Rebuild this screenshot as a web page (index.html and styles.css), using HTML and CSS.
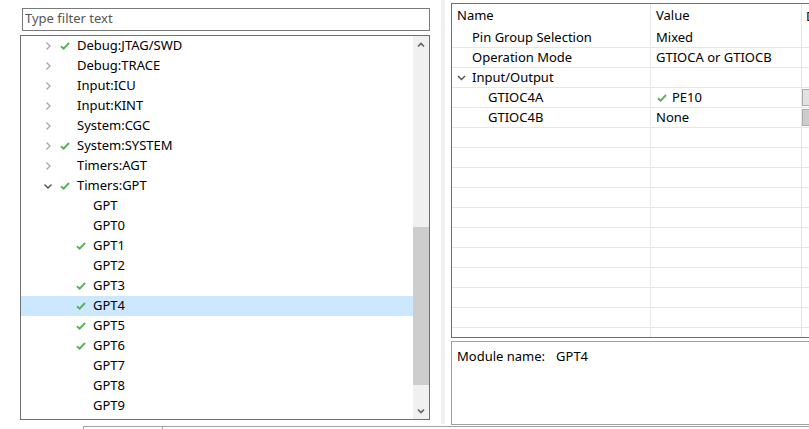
FILE: index.html
```html
<!DOCTYPE html>
<html>
<head>
<meta charset="utf-8">
<link rel="stylesheet" href="styles.css">
</head>
<body>
<div class="app">
  <div class="main">
    <div class="left">
      <div class="filter">Type filter text</div>
      <div class="tree">
        <div class="tree-list">
          <div class="row"><span class="twisty"><svg width="7" height="10" viewBox="0 0 7 10"><path d="M1.5 1.5 L5 5 L1.5 8.5" class="tw-c"/></svg></span><span class="chk"><svg width="10" height="8" viewBox="0 0 10 8"><path d="M1 4.2 L3.6 6.7 L9 1" class="ck"/></svg></span><span class="label">Debug:JTAG/SWD</span></div>
          <div class="row"><span class="twisty"><svg width="7" height="10" viewBox="0 0 7 10"><path d="M1.5 1.5 L5 5 L1.5 8.5" class="tw-c"/></svg></span><span class="chk"></span><span class="label">Debug:TRACE</span></div>
          <div class="row"><span class="twisty"><svg width="7" height="10" viewBox="0 0 7 10"><path d="M1.5 1.5 L5 5 L1.5 8.5" class="tw-c"/></svg></span><span class="chk"></span><span class="label">Input:ICU</span></div>
          <div class="row"><span class="twisty"><svg width="7" height="10" viewBox="0 0 7 10"><path d="M1.5 1.5 L5 5 L1.5 8.5" class="tw-c"/></svg></span><span class="chk"></span><span class="label">Input:KINT</span></div>
          <div class="row"><span class="twisty"><svg width="7" height="10" viewBox="0 0 7 10"><path d="M1.5 1.5 L5 5 L1.5 8.5" class="tw-c"/></svg></span><span class="chk"></span><span class="label">System:CGC</span></div>
          <div class="row"><span class="twisty"><svg width="7" height="10" viewBox="0 0 7 10"><path d="M1.5 1.5 L5 5 L1.5 8.5" class="tw-c"/></svg></span><span class="chk"><svg width="10" height="8" viewBox="0 0 10 8"><path d="M1 4.2 L3.6 6.7 L9 1" class="ck"/></svg></span><span class="label">System:SYSTEM</span></div>
          <div class="row"><span class="twisty"><svg width="7" height="10" viewBox="0 0 7 10"><path d="M1.5 1.5 L5 5 L1.5 8.5" class="tw-c"/></svg></span><span class="chk"></span><span class="label">Timers:AGT</span></div>
          <div class="row"><span class="twisty"><svg width="10" height="7" viewBox="0 0 10 7"><path d="M1.5 1.5 L5 5 L8.5 1.5" class="tw-e"/></svg></span><span class="chk"><svg width="10" height="8" viewBox="0 0 10 8"><path d="M1 4.2 L3.6 6.7 L9 1" class="ck"/></svg></span><span class="label">Timers:GPT</span></div>
          <div class="row child"><span class="twisty"></span><span class="indent"></span><span class="chk"></span><span class="label">GPT</span></div>
          <div class="row child"><span class="twisty"></span><span class="indent"></span><span class="chk"></span><span class="label">GPT0</span></div>
          <div class="row child"><span class="twisty"></span><span class="indent"></span><span class="chk"><svg width="10" height="8" viewBox="0 0 10 8"><path d="M1 4.2 L3.6 6.7 L9 1" class="ck"/></svg></span><span class="label">GPT1</span></div>
          <div class="row child"><span class="twisty"></span><span class="indent"></span><span class="chk"></span><span class="label">GPT2</span></div>
          <div class="row child"><span class="twisty"></span><span class="indent"></span><span class="chk"><svg width="10" height="8" viewBox="0 0 10 8"><path d="M1 4.2 L3.6 6.7 L9 1" class="ck"/></svg></span><span class="label">GPT3</span></div>
          <div class="row child selected"><span class="twisty"></span><span class="indent"></span><span class="chk"><svg width="10" height="8" viewBox="0 0 10 8"><path d="M1 4.2 L3.6 6.7 L9 1" class="ck"/></svg></span><span class="label">GPT4</span></div>
          <div class="row child"><span class="twisty"></span><span class="indent"></span><span class="chk"><svg width="10" height="8" viewBox="0 0 10 8"><path d="M1 4.2 L3.6 6.7 L9 1" class="ck"/></svg></span><span class="label">GPT5</span></div>
          <div class="row child"><span class="twisty"></span><span class="indent"></span><span class="chk"><svg width="10" height="8" viewBox="0 0 10 8"><path d="M1 4.2 L3.6 6.7 L9 1" class="ck"/></svg></span><span class="label">GPT6</span></div>
          <div class="row child"><span class="twisty"></span><span class="indent"></span><span class="chk"></span><span class="label">GPT7</span></div>
          <div class="row child"><span class="twisty"></span><span class="indent"></span><span class="chk"></span><span class="label">GPT8</span></div>
          <div class="row child"><span class="twisty"></span><span class="indent"></span><span class="chk"></span><span class="label">GPT9</span></div>
        </div>
        <div class="vscroll">
          <div class="sb-btn"><svg width="8" height="6" viewBox="0 0 8 6"><path d="M1 4.5 L4 1.5 L7 4.5" class="arrow"/></svg></div>
          <div class="sb-track-top"></div>
          <div class="sb-thumb"></div>
          <div class="sb-fill"></div>
          <div class="sb-btn"><svg width="8" height="6" viewBox="0 0 8 6"><path d="M1 1.5 L4 4.5 L7 1.5" class="arrow"/></svg></div>
        </div>
      </div>
    </div>
    <div class="sash"></div>
    <div class="right">
      <div class="props">
        <div class="prow head"><div class="c1 pad0">Name</div><div class="c2">Value</div><div class="c3">D</div></div>
        <div class="prow"><div class="c1 pad1">Pin Group Selection</div><div class="c2">Mixed</div><div class="c3"></div></div>
        <div class="prow"><div class="c1 pad1">Operation Mode</div><div class="c2">GTIOCA or GTIOCB</div><div class="c3"></div></div>
        <div class="prow"><div class="c1 pad0"><span class="ptwisty"><svg width="9" height="6" viewBox="0 0 9 6"><path d="M1 1 L4.5 4.5 L8 1" class="tw-e"/></svg></span>Input/Output</div><div class="c2"></div><div class="c3"></div></div>
        <div class="prow"><div class="c1 pad2">GTIOC4A</div><div class="c2"><span class="pchk"><svg width="10" height="8" viewBox="0 0 10 8"><path d="M1 4.2 L3.6 6.7 L9 1" class="ck"/></svg></span>PE10</div><div class="c3"><span class="btn light"></span></div></div>
        <div class="prow"><div class="c1 pad2">GTIOC4B</div><div class="c2">None</div><div class="c3"><span class="btn dark"></span></div></div>
        <div class="prow"><div class="c1"></div><div class="c2"></div><div class="c3"></div></div>
        <div class="prow"><div class="c1"></div><div class="c2"></div><div class="c3"></div></div>
        <div class="prow"><div class="c1"></div><div class="c2"></div><div class="c3"></div></div>
        <div class="prow"><div class="c1"></div><div class="c2"></div><div class="c3"></div></div>
        <div class="prow"><div class="c1"></div><div class="c2"></div><div class="c3"></div></div>
        <div class="prow"><div class="c1"></div><div class="c2"></div><div class="c3"></div></div>
        <div class="prow"><div class="c1"></div><div class="c2"></div><div class="c3"></div></div>
        <div class="prow"><div class="c1"></div><div class="c2"></div><div class="c3"></div></div>
        <div class="prow"><div class="c1"></div><div class="c2"></div><div class="c3"></div></div>
        <div class="prow"><div class="c1"></div><div class="c2"></div><div class="c3"></div></div>
        <div class="prow rest"><div class="c1"></div><div class="c2"></div><div class="c3"></div></div>
      </div>
      <div class="module"><span>Module name:</span><span class="modval">GPT4</span></div>
    </div>
  </div>
  <div class="status"><div class="tab"></div></div>
</div>
</body>
</html>
```
FILE: styles.css
```css
* { box-sizing: border-box; }
html, body { margin: 0; padding: 0; background: #fff; }
body {
  width: 809px;
  height: 429px;
  overflow: hidden;
  font-family: "Noto Sans", "Liberation Sans", sans-serif;
  font-size: 13px;
  color: #000;
}
.app { display: flex; flex-direction: column; height: 429px; }
.main { display: flex; height: 426px; }

.left { width: 441px; flex: none; padding-top: 8px; }
.filter {
  margin-left: 22px;
  width: 408px;
  height: 23px;
  border: 1px solid #7a7a7a;
  padding-left: 2px;
  color: #555;
  line-height: 19px;
}
.tree {
  margin-top: 4px;
  margin-left: 20px;
  width: 410px;
  height: 385px;
  border: 1px solid #6f6f6f;
  display: flex;
}
.tree-list { width: 392px; flex: none; }
.row {
  height: 20px;
  display: flex;
  align-items: center;
  padding-left: 19px;
  white-space: nowrap;
}
.label { line-height: 18px; padding-bottom: 2px; }
.row.selected { background: #cce8ff; }
.twisty { width: 16px; height: 20px; flex: none; display: flex; align-items: center; justify-content: center; }
.indent { width: 16px; flex: none; }
.chk { width: 18px; height: 20px; flex: none; display: flex; align-items: center; justify-content: center; margin-right: 3px; }
.tw-c { fill: none; stroke: #a8a8a8; stroke-width: 1.4; }
.tw-e { fill: none; stroke: #505050; stroke-width: 1.4; }
.ck { fill: none; stroke: #5fae5f; stroke-width: 1.9; }

.vscroll { width: 16px; flex: none; background: #f0f0f0; display: flex; flex-direction: column; }
.sb-btn { height: 17px; flex: none; display: flex; align-items: center; justify-content: center; }
.arrow { fill: none; stroke: #606060; stroke-width: 1.6; }
.sb-track-top { height: 174px; flex: none; }
.sb-thumb { height: 158px; flex: none; background: #cdcdcd; }
.sb-fill { flex: 1; }

.sash { width: 4px; flex: none; background: #f0f0f0; height: 424px; }

.right { flex: 1; min-width: 0; overflow: hidden; padding-left: 6px; padding-top: 3px; }
.props {
  width: 380px;
  height: 335px;
  border: 1px solid #6f6f6f;
  display: flex;
  flex-direction: column;
}
.prow { display: flex; height: 20px; flex: none; border-bottom: 1px solid #e6e6e6; line-height: 17px; white-space: nowrap; }
.prow.head { height: 24px; border-bottom: none; line-height: 21px; }
.prow.rest { flex: 1; border-bottom: none; }
.c1 { width: 199px; flex: none; border-right: 1px solid #e6e6e6; display: flex; align-items: center; padding-bottom: 1px; }
.c2 { width: 151px; flex: none; border-right: 1px solid #e6e6e6; padding-left: 5px; display: flex; align-items: center; padding-bottom: 1px; }
.c3 { flex: 1; padding-left: 4px; display: flex; align-items: center; overflow: hidden; }
.c1.pad0 { padding-left: 5px; }
.c1.pad1 { padding-left: 20px; }
.c1.pad2 { padding-left: 36px; }
.ptwisty { width: 15px; display: flex; align-items: center; padding-top: 1px; }
.pchk { width: 16px; display: flex; align-items: center; padding-left: 1px; padding-top: 1px; }
.btn { display: block; width: 20px; height: 17px; margin-left: -4px; border: 1px solid #adadad; }
.btn.light { background: #e1e1e1; }
.btn.dark { background: #cccccc; }

.module {
  margin-top: 3px;
  width: 380px;
  height: 84px;
  border: 1px solid #a0a0a0;
  padding: 5px 0 0 5px;
  line-height: 18px;
}
.modval { margin-left: 11px; }

.status { height: 3px; padding-left: 83px; }
.tab { height: 3px; border-top: 1px solid #a0a0a0; }
.tab::before { content: ""; display: block; width: 78px; height: 2px; border-left: 1px solid #a0a0a0; border-right: 1px solid #a0a0a0; }
```
